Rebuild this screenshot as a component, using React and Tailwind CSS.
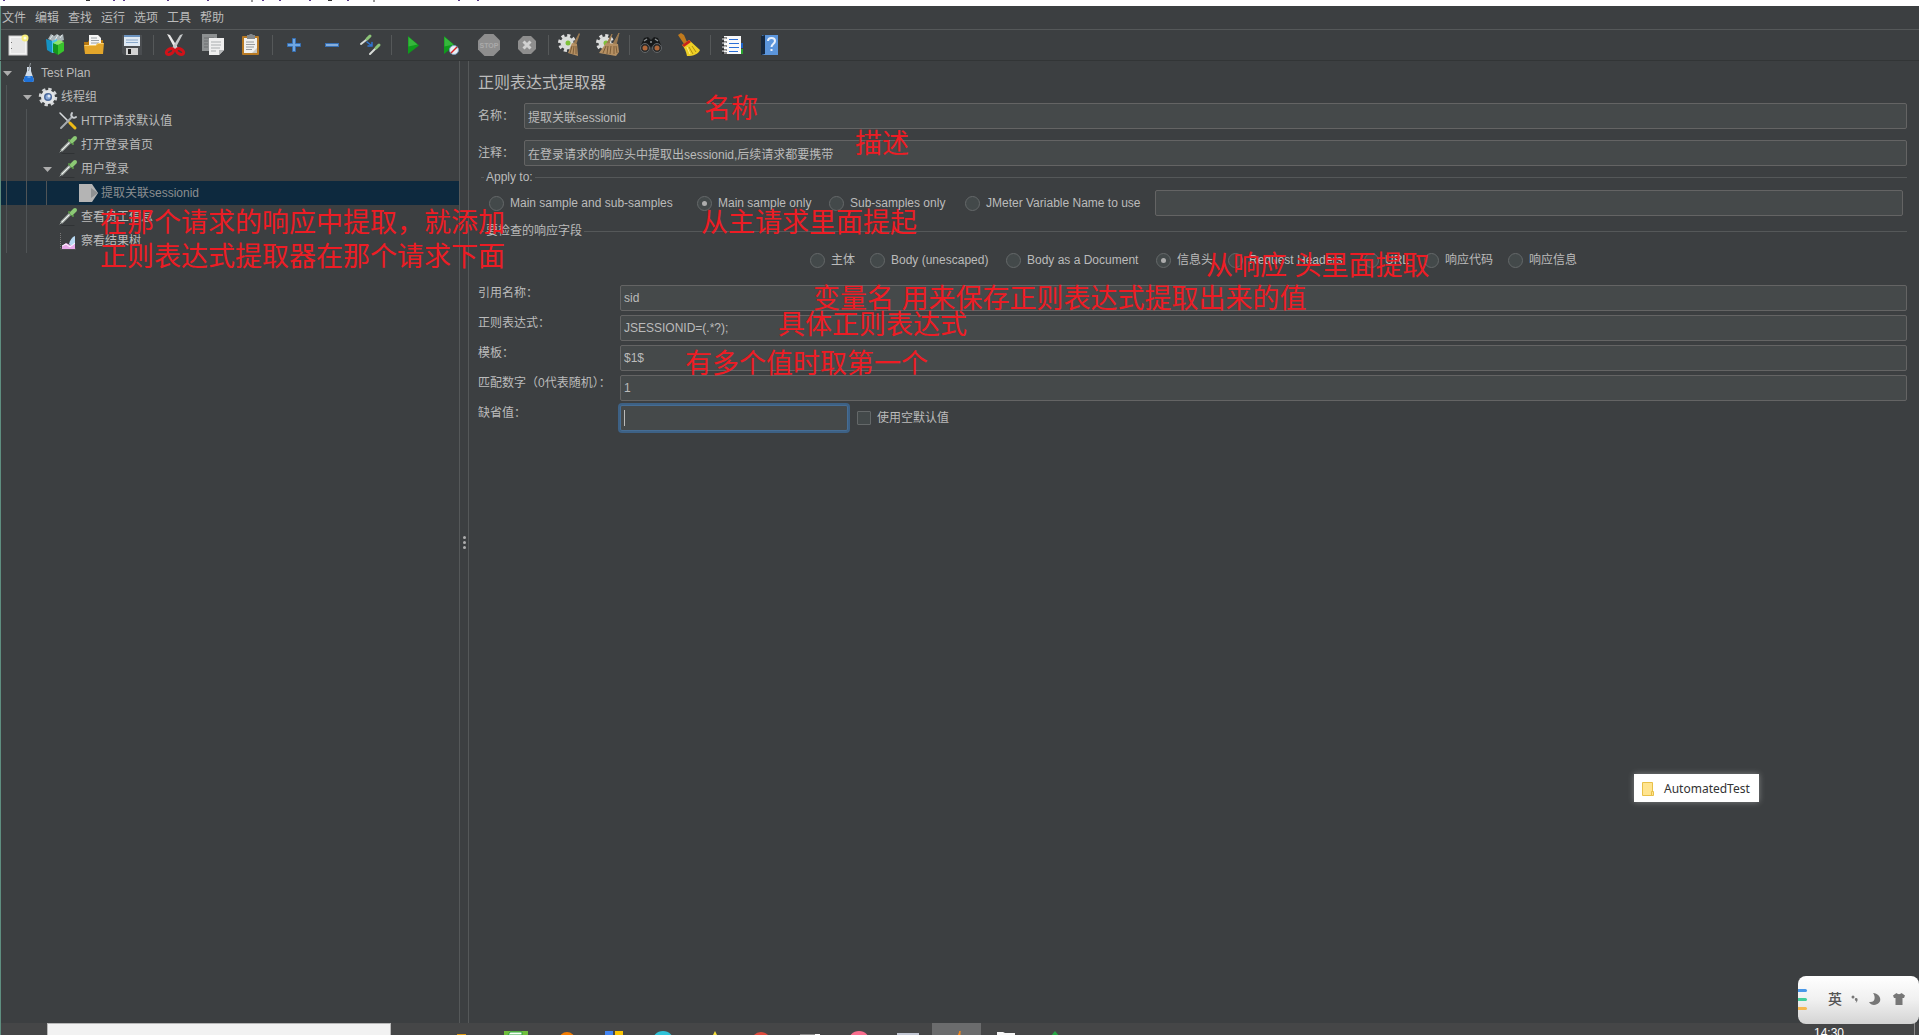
import clsx from "clsx";

const MENUS = ["文件", "编辑", "查找", "运行", "选项", "工具", "帮助"];

/* ---------- toolbar icons ---------- */

const NewIcon = () => (
  <svg width="24" height="24" viewBox="0 0 24 24">
    <rect x="3" y="3" width="18" height="19" fill="#f4f4f4" stroke="#d0d0d0" />
    <rect x="5" y="5" width="14" height="15" fill="#e6e6e6" />
    <path d="M5.500 9v1M5.500 15v1" stroke="#777" />
    <circle cx="19" cy="5" r="3.500" fill="#f6ec7c" />
    <circle cx="19" cy="5" r="1.500" fill="#fffde0" />
  </svg>
);

const TemplatesIcon = () => (
  <svg width="24" height="24" viewBox="0 0 24 24">
    <path d="M4 6l3-5 3 2 3-2 3 2 3-2 1 6-8 3z" fill="#a9b4b8" />
    <path d="M6 6l3-4M11 7l3-5M16 5l2-3" stroke="#e3e9ea" />
    <path d="M2 6l6 2v12l-5-3z" fill="#1593c4" />
    <path d="M8 8l5-2v13l-5 1z" fill="#4fc3e8" />
    <path d="M9 10l5 2v10l-5-3z" fill="#15951d" />
    <path d="M14 12l6-3v9l-6 4z" fill="#38c52c" />
    <path d="M9 10l6-3 5 2-6 3z" fill="#8be667" />
  </svg>
);

const OpenIcon = () => (
  <svg width="24" height="24" viewBox="0 0 24 24">
    <path d="M2 9h4l1-2h14v13H3z" fill="#b9790f" />
    <path d="M7 2h9l3 3v9H7z" fill="#f5f5f5" />
    <path d="M9 5h6M9 7.500h8M9 10h8" stroke="#9aa0a4" />
    <path d="M2 12h12l2-2h6l-1 11H3z" fill="#e3a62b" />
    <path d="M2.500 12.500H14l2-2h5.500" stroke="#f7d070" fill="none" />
  </svg>
);

const SaveIcon = () => (
  <svg width="24" height="24" viewBox="0 0 24 24">
    <path d="M2 2h20v20H4l-2-2z" fill="#4a4d50" />
    <rect x="4" y="2" width="16" height="11" fill="#dfe9f3" />
    <rect x="4" y="2" width="16" height="2" fill="#6b93c0" />
    <path d="M6 7h12M6 9.500h12" stroke="#8aa9cb" />
    <rect x="6" y="15" width="12" height="7" fill="#d3d3d3" />
    <rect x="8" y="16" width="3" height="5" fill="#222" />
  </svg>
);

const CutIcon = () => (
  <svg width="24" height="24" viewBox="0 0 24 24" fill="none">
    <path d="M4 1l3 1 8 13-3 1z" fill="#e9e9e9" />
    <path d="M20 1l-3 1-8 13 3 1z" fill="#c3c6c7" />
    <ellipse cx="7" cy="18.500" rx="4" ry="2.500" stroke="#d11219" strokeWidth="3" transform="rotate(-30 7 18.500)" />
    <ellipse cx="17" cy="18.500" rx="4" ry="2.500" stroke="#d11219" strokeWidth="3" transform="rotate(30 17 18.500)" />
  </svg>
);

const CopyIcon = () => (
  <svg width="24" height="24" viewBox="0 0 24 24">
    <rect x="1" y="1" width="15" height="17" fill="#8d9091" />
    <path d="M3 5h10M3 8h4M3 11h4M3 14h4" stroke="#6c6f70" />
    <path d="M8 5h15v12l-5 5H8z" fill="#efefef" />
    <path d="M10 9h10M10 12h10M10 15h9M10 18h5" stroke="#a9adaf" />
    <path d="M23 17l-5 5v-5z" fill="#b5b8b9" />
  </svg>
);

const PasteIcon = () => (
  <svg width="24" height="24" viewBox="0 0 24 24">
    <rect x="3" y="3" width="17" height="19" rx="1" fill="#b87a24" />
    <rect x="5" y="5" width="13" height="15" fill="#f1f1ee" />
    <path d="M8 2h2l1-1h2l1 1h2v4H8z" fill="#83878a" />
    <path d="M7 9h8M7 11.500h9M7 14h8M7 16.500h6" stroke="#989c9e" />
    <path d="M18 15v5h-5z" fill="#c7c8c4" />
  </svg>
);

const PlusIcon = () => (
  <svg width="24" height="24" viewBox="0 0 24 24">
    <path d="M10.500 5.500h3v5h5v3h-5v5h-3v-5h-5v-3h5z" fill="#6fa6e0" stroke="#3670b5" />
  </svg>
);

const MinusIcon = () => (
  <svg width="24" height="24" viewBox="0 0 24 24">
    <rect x="5.500" y="10.500" width="13" height="3" fill="#86aedb" stroke="#3670b5" />
  </svg>
);

const ToggleIcon = () => (
  <svg width="24" height="24" viewBox="0 0 24 24" fill="none" strokeLinecap="round">
    <path d="M3 11l5-4" stroke="#d8dcd8" strokeWidth="2" />
    <path d="M9 6l3-3" stroke="#8cc478" strokeWidth="3" />
    <path d="M12 21l5-5" stroke="#d8dcd8" strokeWidth="2" />
    <path d="M18 15l3-3" stroke="#8cc478" strokeWidth="3" />
    <path d="M9 9l5 4M14 9.500V13h-4" stroke="#2f74d0" strokeWidth="1.500" />
  </svg>
);

const PlayIcon = () => (
  <svg width="24" height="24" viewBox="0 0 24 24">
    <path d="M7 3l11 9.500L7 21z" fill="#0f9a1c" />
    <path d="M7.500 4l9 7.500-9 2z" fill="#36b63c" />
  </svg>
);

const PlayNoTimersIcon = () => (
  <svg width="24" height="24" viewBox="0 0 24 24">
    <path d="M5 3l11 9.500L5 21z" fill="#0f9a1c" />
    <path d="M5.500 4l9 7.500-9 2z" fill="#36b63c" />
    <circle cx="15" cy="17" r="4.500" fill="#e8eef4" stroke="#7b9dbd" />
    <path d="M12 20l6-6" stroke="#d6201f" strokeWidth="1.500" />
  </svg>
);

const StopIcon = () => (
  <svg width="24" height="24" viewBox="0 0 24 24">
    <path d="M7.500 1h9L23 7.500v9L16.500 23h-9L1 16.500v-9z" fill="#8e8e8e" />
    <text x="12" y="15" textAnchor="middle" fontSize="7" fontWeight="700" fontFamily="Liberation Sans, sans-serif" fill="#aaaaaa">
      STOP
    </text>
  </svg>
);

const ShutdownIcon = () => (
  <svg width="24" height="24" viewBox="0 0 24 24">
    <path d="M8 3h8l5 5v8l-5 5H8l-5-5V8z" fill="#8e8e8e" />
    <path d="M8.500 8.500l7 7M15.500 8.500l-7 7" stroke="#d0d0d0" strokeWidth="3" />
  </svg>
);

const Gear = () => (
  <g>
    <circle cx="9" cy="10" r="7.500" fill="none" stroke="#dedede" strokeWidth="3" strokeDasharray="3.100 2.790" />
    <circle cx="9" cy="10" r="6.500" fill="#d9dcda" />
    <circle cx="10" cy="10" r="2.500" fill="#7ec13a" />
  </g>
);

const ClearIcon = () => (
  <svg width="24" height="24" viewBox="0 0 24 24">
    <Gear />
    <path d="M21 0l1 1-4 11-3-1z" fill="#9a7a52" />
    <path d="M14 10l5 1 1 12-10-3z" fill="#b48f62" />
    <path d="M14 13l-2 7M16 13l-1 8M18 13v8" stroke="#7c5d38" />
  </svg>
);

const ClearAllIcon = () => (
  <svg width="24" height="24" viewBox="0 0 24 24">
    <Gear />
    <path d="M16 1l-3 10-2-1zM23 0l-3 12-3-1z" fill="#9a7a52" stroke="#9a7a52" />
    <path d="M10 10l12 1 1 8-3 4-17-3z" fill="#b48f62" />
    <path d="M10 13l-3 7M12 13l-1 8M15 13l-1 8M18 13v8M20 13l1 7" stroke="#7c5d38" />
  </svg>
);

const SearchIcon = () => (
  <svg width="24" height="24" viewBox="0 0 24 24">
    <path d="M2 12L5 5l4-1 3 3 3-3 4 1 3 7v5h-8l-2-4-2 4H2z" fill="#17191a" />
    <path d="M5 8l3-2M16 6l3 2M11 9h2" stroke="#8b9092" strokeWidth="1.500" />
    <circle cx="6" cy="15" r="4.500" fill="#28292a" stroke="#63676a" />
    <circle cx="18" cy="15" r="4.500" fill="#28292a" stroke="#63676a" />
    <circle cx="6" cy="15" r="2.500" fill="#b0683a" />
    <circle cx="18" cy="15" r="2.500" fill="#b0683a" />
  </svg>
);

const SearchResetIcon = () => (
  <svg width="24" height="24" viewBox="0 0 24 24">
    <path d="M1 2l3-2 3 2 3 7-3 2z" fill="#c07a1d" />
    <path d="M5 12l7-5 11 10c-2 4-6 6-13 6-1-4-2-8-5-11z" fill="#edcf25" />
    <path d="M5 12l7-5 2 2-7 5z" fill="#c9231b" />
    <path d="M12 14l4 7M15 13l4 6" stroke="#b08e10" />
    <path d="M10 14l3 7" stroke="#fff28a" />
  </svg>
);

const FunctionIcon = () => (
  <svg width="24" height="24" viewBox="0 0 24 24">
    <rect x="4" y="3" width="17" height="18" fill="#fafafa" />
    <path d="M2 5h5M2 9h5M2 13h5M2 17h5M2 20h5" stroke="#1c1c1c" />
    <path d="M2 6h4M2 10h4M2 14h4M2 18h4" stroke="#e8e8e8" />
    <path d="M9 6.500h9M9 10.500h10M9 14.500h10M9 18.500h9" stroke="#2b6fd6" />
    <rect x="21" y="10" width="2" height="5" fill="#1c62c9" />
    <rect x="21" y="16" width="2" height="5" fill="#27a12c" />
  </svg>
);

const HelpIcon = () => (
  <svg width="24" height="24" viewBox="0 0 24 24">
    <rect x="4" y="2" width="16" height="20" fill="#5b95dc" />
    <path d="M3 3l4-1v19l-4 1z" fill="#16283f" />
    <path d="M10 8c0-4 7-4 7 0 0 3-3.500 3-3.500 6M13.500 16v2" fill="none" stroke="#e8f0fb" strokeWidth="2" />
  </svg>
);

/* null puts a separator between two groups */
const TOOLS = [
  ["新建", NewIcon],
  ["模板", TemplatesIcon],
  ["打开", OpenIcon],
  ["保存", SaveIcon],
  null,
  ["剪切", CutIcon],
  ["复制", CopyIcon],
  ["粘贴", PasteIcon],
  null,
  ["展开", PlusIcon],
  ["折叠", MinusIcon],
  ["切换", ToggleIcon],
  null,
  ["启动", PlayIcon],
  ["不停顿开始", PlayNoTimersIcon],
  ["停止", StopIcon],
  ["关闭", ShutdownIcon],
  null,
  ["清除", ClearIcon],
  ["清除全部", ClearAllIcon],
  null,
  ["搜索", SearchIcon],
  ["重置搜索", SearchResetIcon],
  null,
  ["函数助手", FunctionIcon],
  ["帮助", HelpIcon],
];

/* ---------- tree icons ---------- */

const FlaskIcon = () => (
  <svg width="20" height="20" viewBox="0 0 20 20">
    <path d="M9 4h4v4l3 9c0 1-1 2-2 2H7c-1 0-2-1-1.500-2L9 8z" fill="#cfdbe8" />
    <path d="M7 13h7.500l1.500 4c0 1-1 2-2 2H7.500c-1 0-2-1-2-2z" fill="#1f72d8" />
    <path d="M9.500 14h3" stroke="#8fc0f5" />
    <path d="M12.500 0l-2 8" stroke="#8f9599" />
  </svg>
);

const GearIcon = () => (
  <svg width="20" height="20" viewBox="0 0 20 20">
    <circle cx="10" cy="10" r="7.500" fill="none" stroke="#d3d5d7" strokeWidth="3.500" strokeDasharray="3.200 2.690" />
    <circle cx="10" cy="10" r="7" fill="#e2e4e6" />
    <circle cx="10" cy="10" r="4" fill="#4a689b" />
    <circle cx="10" cy="10" r="2.500" fill="#86a5d4" />
    <circle cx="11" cy="9" r="1.500" fill="#dfe9f8" />
  </svg>
);

const ToolsIcon = () => (
  <svg width="20" height="20" viewBox="0 0 20 20" fill="none" strokeLinecap="round">
    <path d="M2 2l9 9" stroke="#d9dcde" strokeWidth="1.500" />
    <path d="M12 12l5 5" stroke="#eebb16" strokeWidth="3" />
    <path d="M3 17L14 6" stroke="#a8adb0" strokeWidth="2" />
    <path d="M14 2c-2 3 1 6 4 4" stroke="#c9cdd0" strokeWidth="2" />
  </svg>
);

const DropperIcon = () => (
  <svg width="20" height="20" viewBox="0 0 20 20" fill="none" strokeLinecap="round">
    <path d="M4 18.500h12" stroke="#303335" />
    <path d="M2 17l2-2" stroke="#a9b0ac" />
    <path d="M4 15l8-8" stroke="#a9b0ac" strokeWidth="3" />
    <path d="M4 15l7-7" stroke="#f0f4f1" />
    <path d="M11 5l4 4" stroke="#5c9649" strokeWidth="2" />
    <path d="M14 6l3-3" stroke="#8cc975" strokeWidth="4" />
  </svg>
);

const ExtractorIcon = () => (
  <svg width="20" height="20" viewBox="0 0 20 20">
    <path d="M1 1h13l6 9-6 9H1z" fill="#b4b4b4" />
    <path d="M13 5l7 5-7 5z" fill="#8f9192" />
  </svg>
);

const ResultsIcon = () => (
  <svg width="20" height="20" viewBox="0 0 20 20">
    <path d="M2.500 2v16h15" fill="none" stroke="#777" strokeDasharray="1 1" />
    <path d="M4 18v-3l4-3 4 2 5-5v9z" fill="#e9a9ea" />
    <path d="M11 13c1-4 3-7 6-8v7c-2 3-4 3-6 1z" fill="#b8d8f3" />
    <path d="M4 15l4-2 4 3 5-4" fill="none" stroke="#fff" />
  </svg>
);

const TREE = [
  { depth: 0, open: true, Icon: FlaskIcon, label: "Test Plan" },
  { depth: 1, open: true, Icon: GearIcon, label: "线程组" },
  { depth: 2, Icon: ToolsIcon, label: "HTTP请求默认值" },
  { depth: 2, Icon: DropperIcon, label: "打开登录首页" },
  { depth: 2, open: true, Icon: DropperIcon, label: "用户登录" },
  { depth: 3, Icon: ExtractorIcon, label: "提取关联sessionid", selected: true },
  { depth: 2, Icon: DropperIcon, label: "查看员工信息" },
  { depth: 2, Icon: ResultsIcon, label: "察看结果树" },
];

const TreeRow = ({ depth, open, Icon, label, selected }) => (
  <li
    className={clsx(
      "flex h-6 items-center whitespace-nowrap",
      selected && "bg-[#0d293e] text-[#8a8d8f]"
    )}
  >
    {Array.from({ length: depth }, (_, i) => (
      <span key={i} className="h-full w-5 shrink-0 pl-[5px]">
        <span className="block h-full w-px bg-[#505456]" />
      </span>
    ))}
    <span className="flex w-3 shrink-0 justify-center">
      {open && (
        <svg width="9" height="5" viewBox="0 0 9 5">
          <path d="M0 0h9L4.500 5z" fill="#adadad" />
        </svg>
      )}
    </span>
    <span className="mr-[3px] ml-[5px] shrink-0">
      <Icon />
    </span>
    {label}
  </li>
);

/* ---------- form ---------- */

const FIELD =
  "h-[26px] min-w-0 rounded-[2px] border border-[#646464] bg-[#45494a] px-[3px] text-[#bbbbbb] outline-none";

const Radio = ({ name, label, checked, className }) => (
  <label className={clsx("flex shrink-0 items-center gap-[6px] whitespace-nowrap", className)}>
    <input
      type="radio"
      name={name}
      defaultChecked={checked}
      className="grid size-[15px] shrink-0 appearance-none place-items-center rounded-full border border-[#646869] bg-[#43494a] before:size-[5px] before:rounded-full before:content-[''] checked:before:bg-[#adadad]"
    />
    {label}
  </label>
);

const TextRow = ({ id, label, value }) => (
  <div className="flex items-center">
    <label htmlFor={id} className="w-[46px] shrink-0">
      {label}
    </label>
    <input id={id} defaultValue={value} className={clsx(FIELD, "flex-1")} />
  </div>
);

const PARAMS = [
  ["refname", "引用名称：", "sid"],
  ["regex", "正则表达式：", "JSESSIONID=(.*?);"],
  ["template", "模板：", "$1$"],
  ["match", "匹配数字（0代表随机）：", "1"],
];

const SCOPES = [
  { label: "Main sample and sub-samples", className: "w-[194px]" },
  { label: "Main sample only", className: "w-[118px]", checked: true },
  { label: "Sub-samples only", className: "w-[122px]" },
];

const SOURCES = [
  { label: "主体", className: "w-[46px]" },
  { label: "Body (unescaped)", className: "w-[122px]" },
  { label: "Body as a Document", className: "w-[136px]" },
  { label: "信息头", className: "w-[58px]", checked: true },
  { label: "Request Headers", className: "w-[122px]" },
  { label: "URL", className: "w-[46px]" },
  { label: "响应代码", className: "w-[70px]" },
  { label: "响应信息", className: "w-[70px]" },
];

const ExtractorPanel = () => (
  <main className="min-w-0 flex-1 border-l border-[#555859] pt-3 pr-3 pl-[9px]">
    <h1 className="text-base leading-5">正则表达式提取器</h1>

    <div className="mt-[10px] flex flex-col gap-[11px]">
      <TextRow id="name" label="名称：" value="提取关联sessionid" />
      <TextRow id="comment" label="注释：" value="在登录请求的响应头中提取出sessionid,后续请求都要携带" />
    </div>

    <fieldset className="mt-[3px] ml-[3px] border-t border-[#555859]">
      <legend className="ml-[3px] px-[2px] leading-4">Apply to:</legend>
      <div className="mt-[5px] flex items-center gap-[14px] pr-1 pl-2">
        {SCOPES.map((scope) => (
          <Radio key={scope.label} name="scope" {...scope} />
        ))}
        <div className="flex flex-1 items-center gap-[10px]">
          <Radio name="scope" label="JMeter Variable Name to use" className="w-[180px]" />
          <input aria-label="JMeter Variable Name" className={clsx(FIELD, "flex-1")} />
        </div>
      </div>
    </fieldset>

    <fieldset className="mt-[7px] ml-[3px] border-t border-[#555859]">
      <legend className="ml-[3px] px-[2px] leading-4">要检查的响应字段</legend>
      <div className="mt-[13px] flex h-4 items-center justify-center gap-[14px]">
        {SOURCES.map((source) => (
          <Radio key={source.label} name="source" {...source} />
        ))}
      </div>
    </fieldset>

    <div className="mt-[17px] grid grid-cols-[142px_1fr] gap-y-1">
      {PARAMS.map(([id, label, value]) => (
        <div key={id} className="contents">
          <label htmlFor={id} className="leading-4 whitespace-nowrap">
            {label}
          </label>
          <input id={id} defaultValue={value} className={FIELD} />
        </div>
      ))}
      <label htmlFor="default" className="leading-4">
        缺省值：
      </label>
      <div className="flex items-center gap-[9px]">
        <div className="relative flex w-[228px]">
          <input
            id="default"
            className="h-[26px] w-full rounded-[2px] border border-[#466d94] bg-[#45494a] px-[3px] ring-2 ring-[#3d6185] outline-none"
          />
          <span className="absolute top-[5px] left-1 h-4 w-px bg-[#bbbbbb]" />
        </div>
        <label className="flex items-center gap-[6px]">
          <input
            type="checkbox"
            className="size-[14px] appearance-none rounded-[1px] border border-[#646869] bg-[#43494a]"
          />
          使用空默认值
        </label>
      </div>
    </div>
  </main>
);

/* ---------- red notes over the window ---------- */

const Note = ({ className, children }) => (
  <p
    className={clsx(
      "pointer-events-none absolute text-[27px] leading-[34px] whitespace-nowrap text-[#ed1c24]",
      className
    )}
  >
    {children}
  </p>
);

const Notes = () => (
  <>
    <Note className="top-[92px] left-[704px]">名称</Note>
    <Note className="top-[127px] left-[855px]">描述</Note>
    <Note className="top-[206px] left-[100px]">
      在那个请求的响应中提取，就添加
      <br />
      正则表达式提取器在那个请求下面
    </Note>
    <Note className="top-[206px] left-[701px]">从主请求里面提起</Note>
    <Note className="top-[249px] left-[1206px]">从响应 头里面提取</Note>
    <Note className="top-[282px] left-[813px]">变量名 用来保存正则表达式提取出来的值</Note>
    <Note className="top-[308px] left-[778px]">具体正则表达式</Note>
    <Note className="top-[347px] left-[685px]">有多个值时取第一个</Note>
  </>
);

/* ---------- desktop ---------- */

const DragLabel = () => (
  <div className="absolute top-[774px] right-[160px] flex h-7 w-[125px] items-center gap-[10px] bg-white pt-px pl-2 font-['Noto_Sans','Noto_Sans_CJK_SC',sans-serif] text-[12px] text-[#333333] shadow-[0_0_6px_rgba(255,255,255,0.35)]">
    <svg width="12" height="14" viewBox="0 0 12 14">
      <path d="M.5.5h10v13H.5z" fill="#ffe48f" stroke="#e8c048" />
      <path d="M9.500 9.500h2v4h-2z" fill="#ffe48f" stroke="#e8c048" />
    </svg>
    AutomatedTest
  </div>
);

const InputMethodBar = () => (
  <div className="absolute right-0 bottom-[11px] flex h-12 w-[121px] items-center overflow-hidden rounded-lg bg-linear-to-b from-white via-[#f0f0f0] to-[#d4d4d4] pb-[2px] text-[#555555]">
    <div className="flex w-[9px] flex-col gap-[6px]">
      <span className="h-[3px] rounded-r-full bg-[#4a98e8]" />
      <span className="h-[3px] rounded-r-full bg-[#45cf9c]" />
      <span className="h-[3px] rounded-r-full bg-[#f5b850]" />
    </div>
    <span className="ml-[21px] text-[14px] leading-4 font-medium">英</span>
    <svg className="ml-2" width="10" height="10" viewBox="0 0 10 10" fill="#777">
      <circle cx="3" cy="3" r="1.500" />
      <path d="M5 4.500c2-1 3 0 2.500 2-.3 1.300-1 2-2 2.500.8-1 .8-1.500.7-2-1 0-1.700-1-1.200-2.500z" />
    </svg>
    <svg className="ml-[9px]" width="12" height="12" viewBox="0 0 12 12" fill="#777">
      <path d="M4 0c9 1 10 11 1 12-2 0-4-1-5-3 6 1 7-5 4-9z" />
    </svg>
    <svg className="ml-3" width="12" height="12" viewBox="0 0 12 12" fill="#777">
      <path d="M3.500 0c1 1.500 4 1.500 5 0L12 2.500 11 5H9.500v7h-7V5H1L0 2.500z" />
    </svg>
  </div>
);

/* only the tops of the pinned icons show above the screen edge */
const PINNED = [
  { name: "任务视图", art: <path d="M2 11h9v4H2z" fill="#e09a10" /> },
  {
    name: "微信",
    art: (
      <>
        <path d="M0 8h24v6H0z" fill="#6fbf3c" />
        <path d="M4 12l2-3h12v3z" fill="#f4fff0" stroke="#2c9c3f" />
      </>
    ),
  },
  { name: "火狐", art: <circle cx="14" cy="17" r="8" fill="#f57c00" /> },
  {
    name: "应用商店",
    art: (
      <>
        <path d="M3 8h8v6H3z" fill="#4285f4" />
        <path d="M13 8h8v6h-8z" fill="#fbc503" />
      </>
    ),
  },
  { name: "浏览器", art: <circle cx="12" cy="19" r="11" fill="#2fc2d8" /> },
  { name: "收藏", art: <path d="M15 8l3 6h-6z" fill="#f6e13a" /> },
  { name: "红色应用", art: <circle cx="12" cy="19" r="10" fill="#de4a3c" /> },
  {
    name: "终端",
    art: (
      <>
        <path d="M2 11h15v3H2z" fill="#8a8a8a" />
        <path d="M17 11h5v3h-5z" fill="#fff" />
      </>
    ),
  },
  { name: "粉色应用", art: <circle cx="12" cy="19" r="11" fill="#f96d8e" /> },
  { name: "窗口", art: <path d="M1 10h22v4H1z" fill="#c3c8d4" /> },
  { name: "JMeter", active: true, art: <path d="M13 13l2-5v5z" fill="#f58a1f" stroke="#f58a1f" /> },
  { name: "资源管理器", art: <path d="M3 9h6l2 1h10v4H3z" fill="#f7f7f7" /> },
  { name: "绿色应用", art: <path d="M12 8l5 6H7z" fill="#28a745" /> },
];

const Taskbar = () => (
  <footer className="flex h-3 shrink-0 items-start overflow-hidden bg-[#454647]">
    <input
      aria-label="搜索"
      className="ml-[46px] h-8 w-[344px] border border-[#b8b8b8] bg-[#f2f2f2] outline-none"
    />
    <nav className="ml-[51px] flex">
      {PINNED.map(({ name, art, active }) => (
        <button
          key={name}
          aria-label={name}
          className={clsx("flex h-3 w-[49px] items-start justify-center", active && "bg-[#6b6c6d]")}
        >
          <svg width="24" height="12" viewBox="0 0 24 12">
            {art}
          </svg>
        </button>
      ))}
    </nav>
    <time className="mt-[2px] ml-auto text-[12px] leading-4 text-white">14:30</time>
    <span className="mr-1 ml-[70px] h-3 w-px bg-[#8a8a8a]" />
  </footer>
);

export default function App() {
  return (
    <div className="relative flex h-screen flex-col overflow-hidden bg-[#3c3f41] font-['Liberation_Sans','Noto_Sans_CJK_SC',sans-serif] text-[12px] text-[#bbbbbb]">
      {/* sliver of the page behind the window */}
      <div className="h-[6px] shrink-0 bg-white">
        <svg width="520" height="2" viewBox="0 0 520 2">
          <path
            d="M4 0v1M114 0v1M124 0v1M168 0v1M208 0v1M263 0v1M280 0v1M310 0v1M348 0v1M459 0v1M478 0v1"
            stroke="#5a3a8c"
            strokeWidth="2"
          />
          <path d="M86 .5h4M252 0v2M328 .5h4M374 0v2" stroke="#333" />
        </svg>
      </div>

      <div className="flex min-h-0 flex-1 flex-col border-l border-[#5f8f80]">
        <nav className="flex h-6 shrink-0 items-start gap-[9px] border-b border-[#555859] pt-px pl-px">
          {MENUS.map((menu) => (
            <button key={menu} className="h-[22px] w-6 whitespace-nowrap">
              {menu}
            </button>
          ))}
        </nav>

        <div className="-ml-[2px] flex h-[31px] shrink-0 items-center border-b border-[#323536]">
          {TOOLS.map((tool, i) => {
            if (!tool) {
              return (
                <span key={i} className="flex w-[5px] justify-center">
                  <span className="h-5 w-px bg-[#555859]" />
                </span>
              );
            }
            const [label, Icon] = tool;
            return (
              <button key={i} aria-label={label} className="flex w-[38px] justify-center">
                <Icon />
              </button>
            );
          })}
        </div>

        <div className="flex min-h-0 flex-1">
          <ul className="w-[459px] shrink-0 border-r border-[#555859]">
            {TREE.map((node) => (
              <TreeRow key={node.label} {...node} />
            ))}
          </ul>
          <div className="flex w-2 shrink-0 flex-col items-center justify-center gap-[2px]">
            <span className="size-[3px] rounded-full bg-[#adadad]" />
            <span className="size-[3px] rounded-full bg-[#adadad]" />
            <span className="size-[3px] rounded-full bg-[#adadad]" />
          </div>
          <ExtractorPanel />
        </div>

        <Taskbar />
      </div>

      <Notes />
      <DragLabel />
      <InputMethodBar />
    </div>
  );
}
